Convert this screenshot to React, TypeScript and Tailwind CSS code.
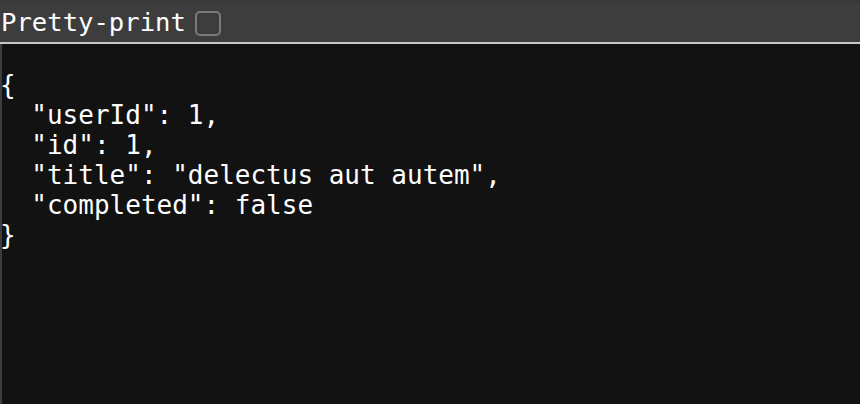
export default function App() {
  return (
    <div className="flex h-[404px] w-[860px] flex-col overflow-hidden bg-[#121212] font-['DejaVu_Sans_Mono',monospace] text-white">
      <div className="flex h-[42px] shrink-0 items-center gap-[9px] border-t-[3px] border-[#393939] bg-[#3d3d3d] pl-[1px]">
        <span className="text-[25.6px] leading-none">Pretty-print</span>
        <span className="mt-[1px] h-[25px] w-[26px] rounded-[5px] border-2 border-[#7a7a7a]" />
      </div>
      <div className="h-[2px] shrink-0 bg-[#c8c8c8]" />
      <div className="relative flex-1">
        <pre className="pt-[26px] font-['DejaVu_Sans_Mono',monospace] text-[26px] leading-[30px] text-white">
{`{
  "userId": 1,
  "id": 1,
  "title": "delectus aut autem",
  "completed": false
}`}
        </pre>
        {/* window edge */}
        <div className="absolute inset-y-0 left-0 w-[2px] bg-[#3d3d3d]" />
      </div>
    </div>
  );
}
